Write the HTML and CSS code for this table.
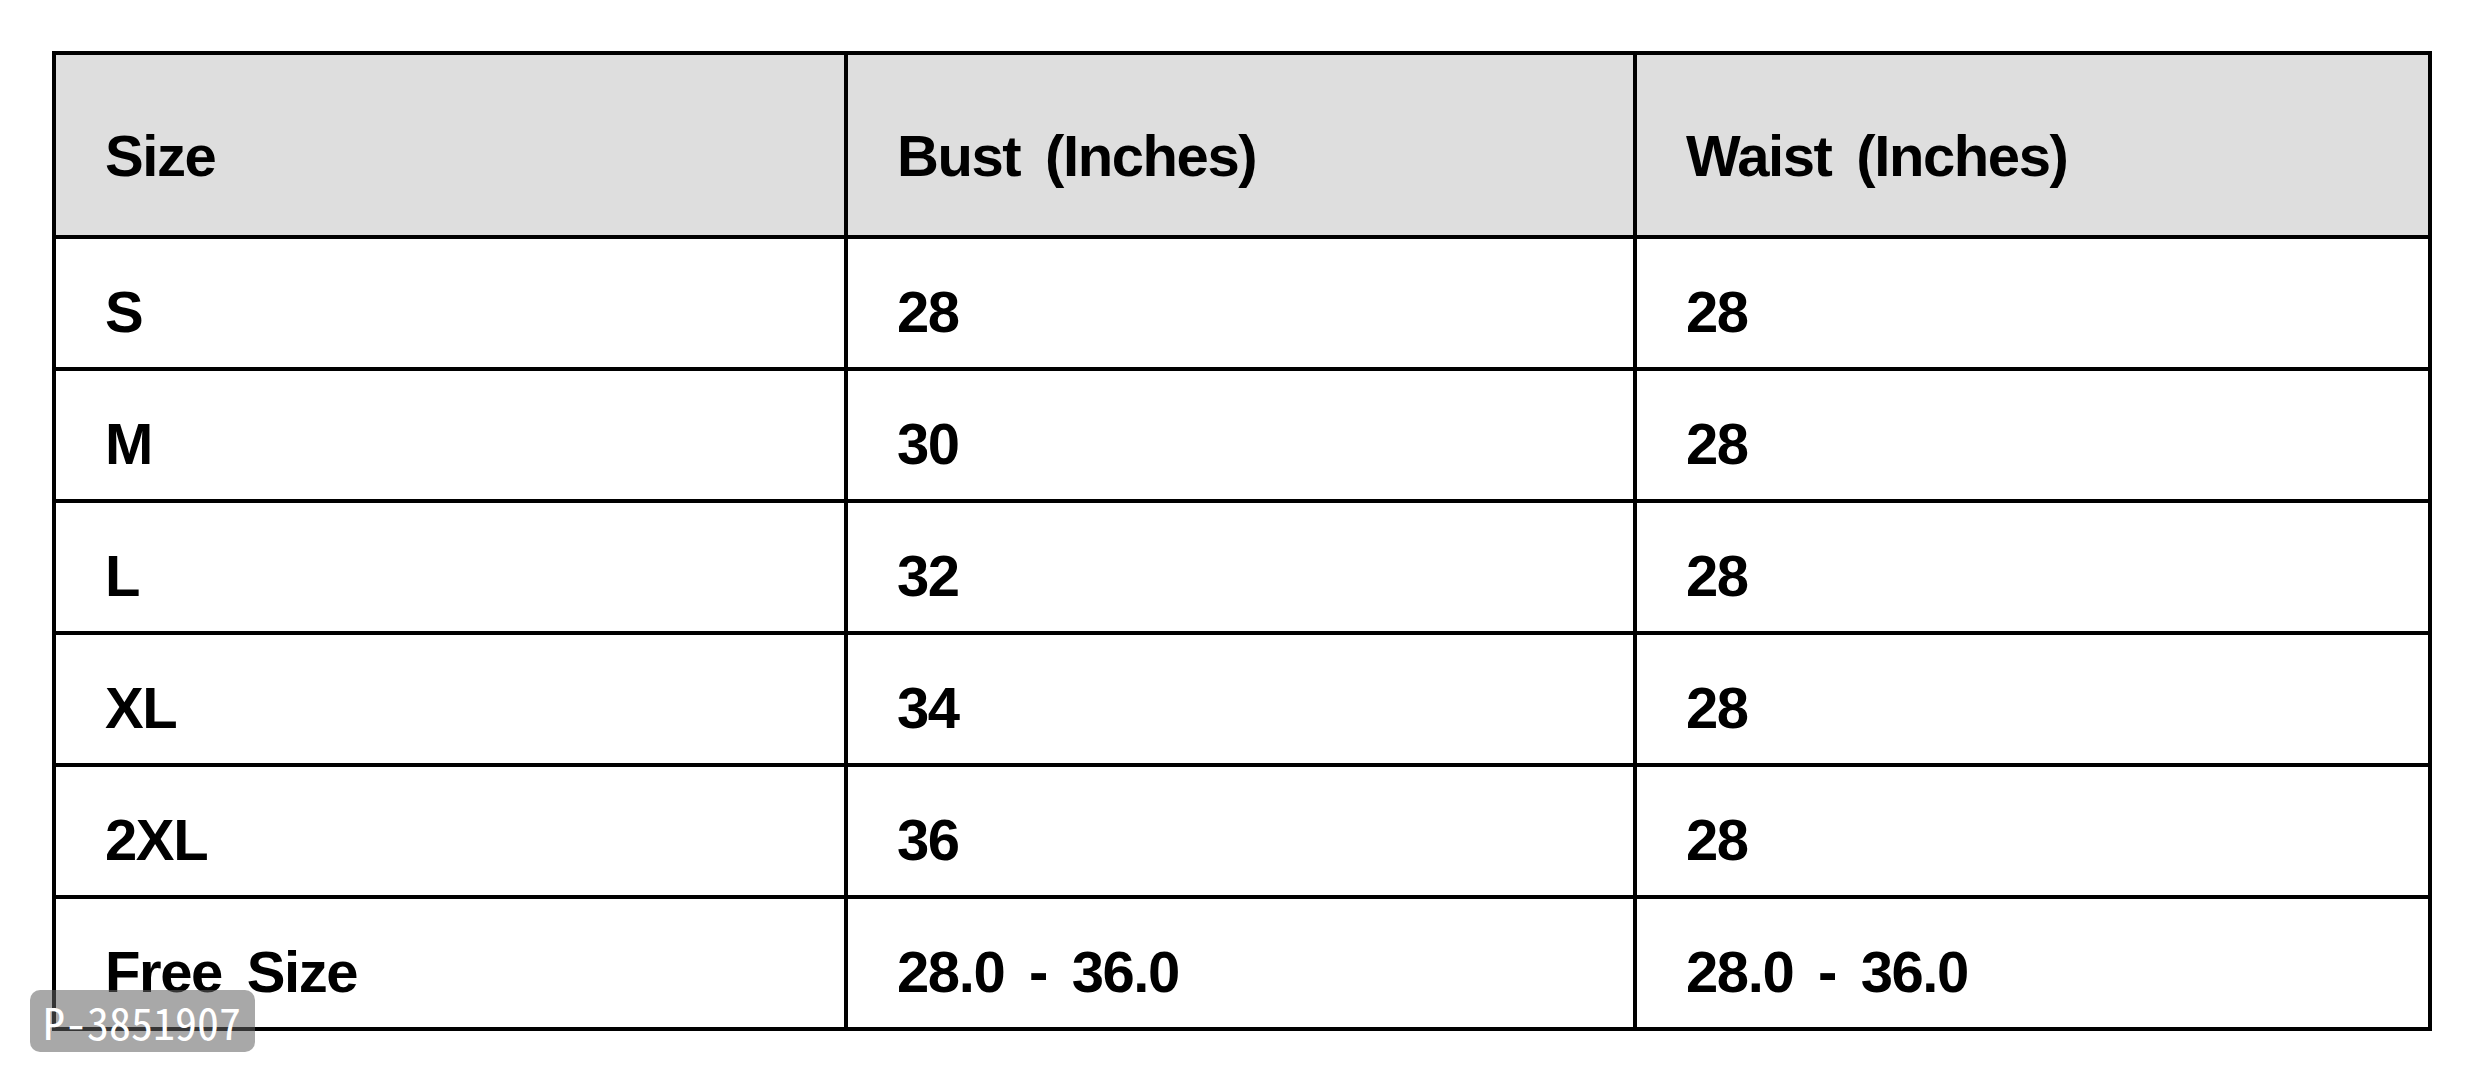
FILE: index.html
```
<!DOCTYPE html>
<html>
<head>
<meta charset="utf-8">
<link rel="stylesheet" href="styles.css">
</head>
<body>
<div class="page">
  <table class="size-table">
    <colgroup>
      <col class="c1">
      <col class="c2">
      <col class="c3">
    </colgroup>
    <thead>
      <tr class="head-row">
        <th>Size</th>
        <th>Bust (Inches)</th>
        <th>Waist (Inches)</th>
      </tr>
    </thead>
    <tbody>
      <tr><td>S</td><td>28</td><td>28</td></tr>
      <tr><td>M</td><td>30</td><td>28</td></tr>
      <tr><td>L</td><td>32</td><td>28</td></tr>
      <tr><td>XL</td><td>34</td><td>28</td></tr>
      <tr><td>2XL</td><td>36</td><td>28</td></tr>
      <tr><td>Free Size</td><td>28.0 - 36.0</td><td>28.0 - 36.0</td></tr>
    </tbody>
  </table>
  <div class="badge">P-3851907</div>
</div>
</body>
</html>
```
FILE: styles.css
```
html, body {
  margin: 0;
  padding: 0;
  background: #fff;
}
.page {
  position: relative;
  width: 2476px;
  height: 1080px;
  padding: 51px 0 0 52px;
  box-sizing: border-box;
}
.size-table {
  border-collapse: collapse;
  width: 2376px;
  table-layout: fixed;
  border: 4px solid #000;
  font-family: "Liberation Sans", Arial, sans-serif;
  font-weight: bold;
  font-size: 58px;
  color: #000;
  letter-spacing: -1.4px;
  word-spacing: 10px;
}
.c1 { width: 792px; }
.c2 { width: 789px; }
.c3 { width: 795px; }
.size-table th,
.size-table td {
  border: 4px solid #000;
  text-align: left;
  vertical-align: middle;
  padding: 17px 0 0 49px;
  white-space: nowrap;
}
.size-table th {
  background: #dedede;
  padding-top: 21px;
}
.head-row { height: 184px; }
.size-table tbody tr { height: 132px; }
.badge {
  position: absolute;
  left: 30px;
  top: 990px;
  width: 225px;
  height: 62px;
  box-sizing: border-box;
  padding-left: 13px;
  border-radius: 10px;
  background: rgba(96, 96, 96, 0.55);
  color: #fff;
  font-family: "Noto Sans Mono CJK SC", "DejaVu Sans Mono", monospace;
  font-size: 44px;
  line-height: 62px;
}
```
